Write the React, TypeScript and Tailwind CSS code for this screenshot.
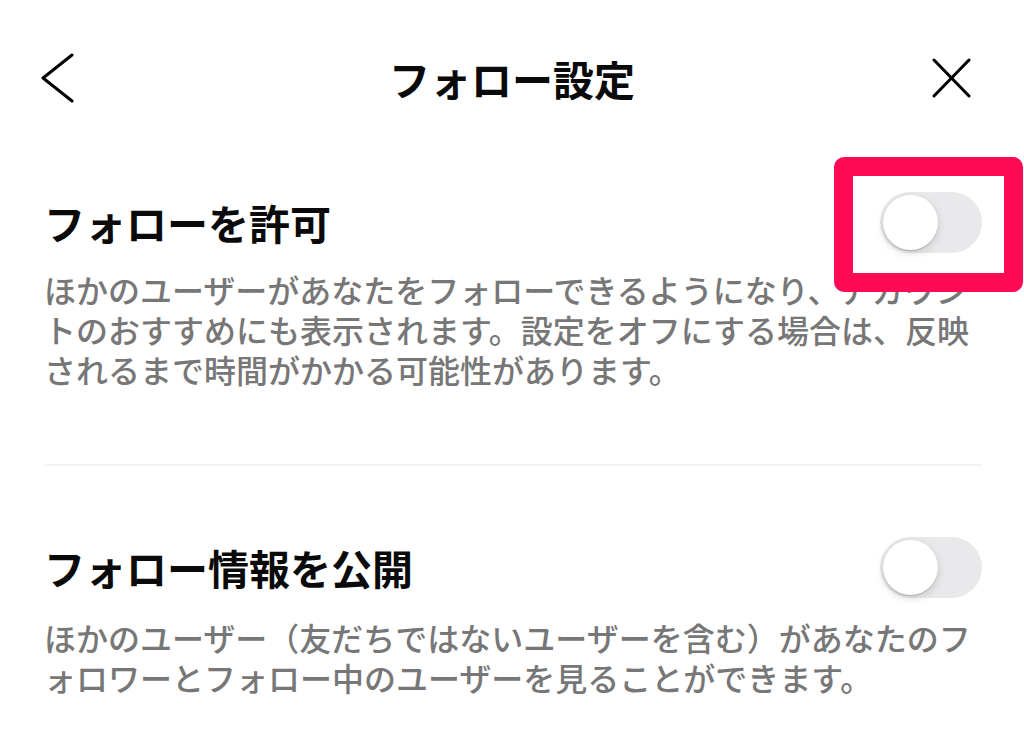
import React from 'react';

const Toggle = () => (
  <div className="relative h-[61px] w-[102px] shrink-0 rounded-full bg-[#e9e9eb]">
    <div className="absolute left-[3px] top-[3px] h-[55px] w-[55px] rounded-full bg-white shadow-[0_3px_8px_rgba(0,0,0,0.15),0_1px_1px_rgba(0,0,0,0.16)]" />
  </div>
);

interface SettingProps {
  title: string;
  description: string;
  descGap: string;
}

const SettingRow: React.FC<SettingProps> = ({ title, description, descGap }) => (
  <div>
    <div className="flex h-[61px] items-center justify-between">
      <h2 className="text-[41px] font-bold leading-none tracking-normal text-[#0a0a0a]">{title}</h2>
      <Toggle />
    </div>
    <p className={`${descGap} text-[32px] font-medium leading-[40px] text-[#777777]`}>{description}</p>
  </div>
);

export default function App() {
  return (
    <div
      className="relative h-[749px] w-full overflow-hidden bg-white"
      style={{ fontFamily: '"Noto Sans CJK JP", "Noto Sans", sans-serif' }}
    >
      {/* header */}
      <div className="mt-[50px] grid h-[56px] grid-cols-[1fr_auto_1fr] items-center">
        <div className="pl-[41px]">
          <svg width="34" height="52" viewBox="0 0 34 52" fill="none" stroke="#000" strokeWidth="3" strokeLinecap="round" strokeLinejoin="round">
            <polyline points="31,3 2,26 31,49" />
          </svg>
        </div>
        <h1 className="text-[41px] font-bold leading-none text-[#0a0a0a]">フォロー設定</h1>
        <div className="flex justify-end pr-[52px]">
          <svg width="41" height="41" viewBox="0 0 41 41" fill="none" stroke="#000" strokeWidth="3" strokeLinecap="round">
            <line x1="3" y1="2" x2="38" y2="38" />
            <line x1="38" y1="2" x2="3" y2="38" />
          </svg>
        </div>
      </div>

      <div className="pl-[44px] pr-[42px]">
        <div className="mt-[86px]">
          <SettingRow
            title="フォローを許可"
            description="ほかのユーザーがあなたをフォローできるようになり、アカウントのおすすめにも表示されます。設定をオフにする場合は、反映されるまで時間がかかる可能性があります。"
            descGap="mt-[16px]"
          />
        </div>

        <div className="mt-[75px] h-[2px] bg-[#f3f3f3]" />

        <div className="mt-[71px]">
          <SettingRow
            title="フォロー情報を公開"
            description="ほかのユーザー（友だちではないユーザーを含む）があなたのフォロワーとフォロー中のユーザーを見ることができます。"
            descGap="mt-[19px]"
          />
        </div>
      </div>

      {/* highlight box drawn over the first toggle */}
      <div className="absolute left-[834px] top-[157px] h-[135px] w-[189px] rounded-[10px] border-[19px] border-[#ff0a55]" />
    </div>
  );
}
